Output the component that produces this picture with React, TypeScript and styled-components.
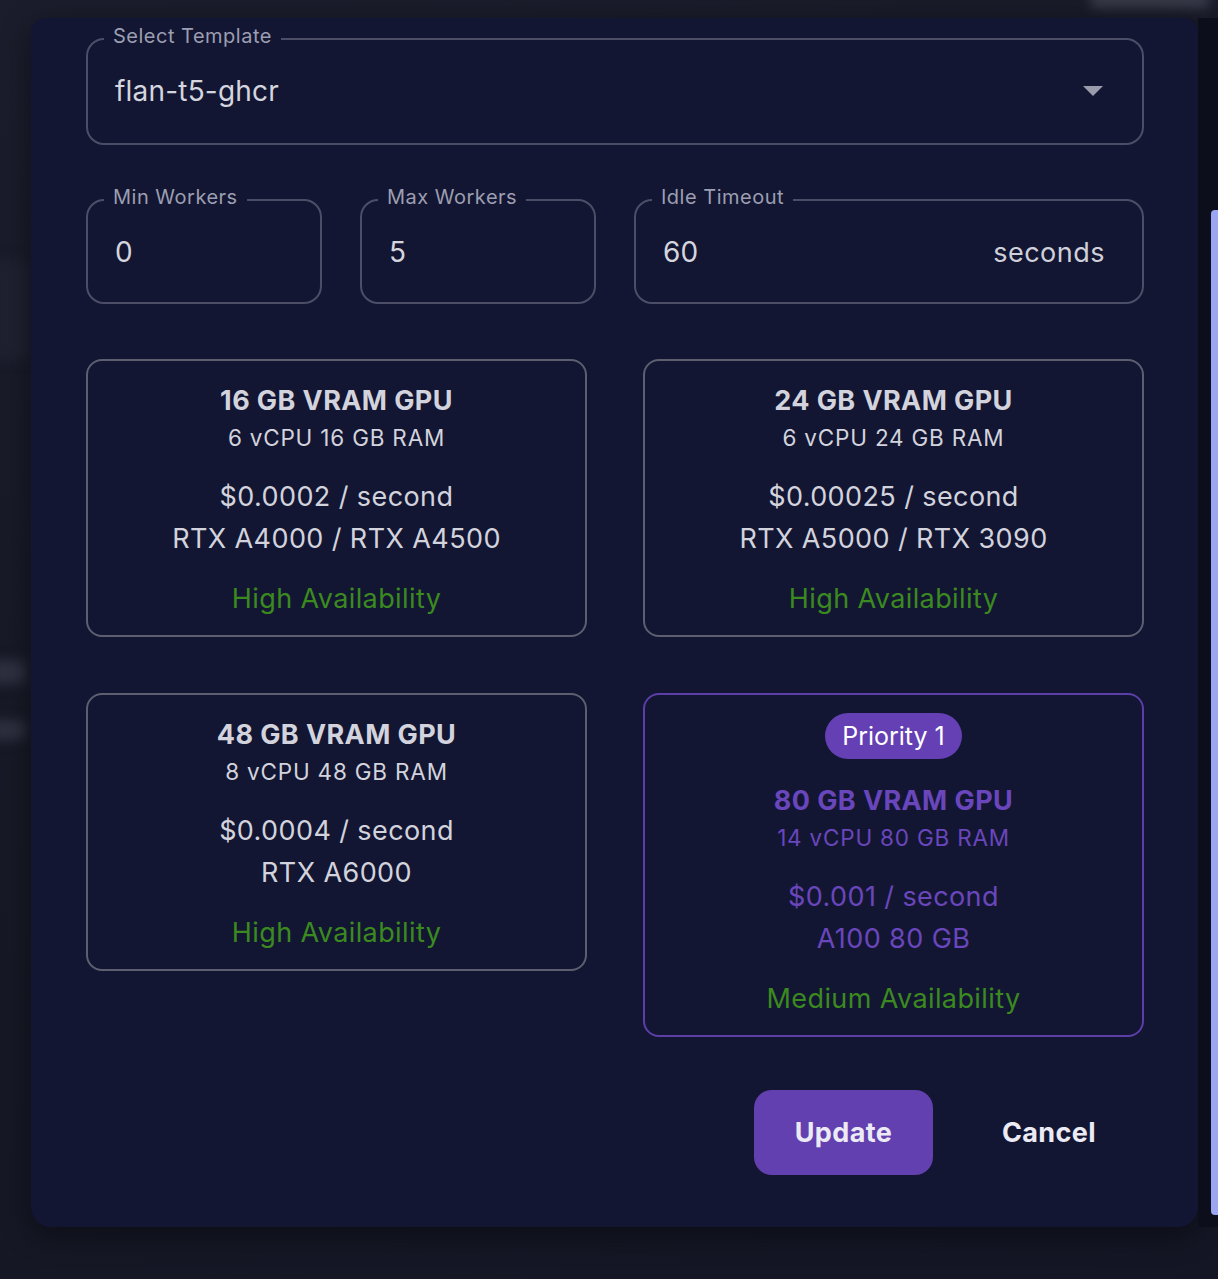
import React from "react";
import styled, { createGlobalStyle } from "styled-components";

const Global = createGlobalStyle`
  html, body { margin: 0; padding: 0; background: #161826; }
  body { font-family: Inter, "Noto Sans", "Liberation Sans", sans-serif; }
  * { box-sizing: border-box; }
`;

const Page = styled.div`
  position: relative;
  width: 1218px;
  height: 1279px;
  overflow: hidden;
  display: flex;
  align-items: flex-start;
  padding: 18px 0 0 31px;
  background: linear-gradient(160deg, #1b1d2c 0%, #171926 45%, #141625 100%);
`;

const Blur = styled.div<{ $x: number; $y: number; $w: number; $h: number; $c: string }>`
  position: absolute;
  left: ${(p) => p.$x}px;
  top: ${(p) => p.$y}px;
  width: ${(p) => p.$w}px;
  height: ${(p) => p.$h}px;
  background: ${(p) => p.$c};
  filter: blur(6px);
  border-radius: 6px;
`;

const Modal = styled.div`
  position: relative;
  width: 1167px;
  height: 1209px;
  background: #131632;
  border-radius: 14px 14px 20px 20px;
  box-shadow: 0 8px 30px rgba(0, 0, 0, 0.45);
  padding: 6px 54px 0 55px;
  display: flex;
  flex-direction: column;
`;

const Gutter = styled.div`
  position: relative;
  width: 20px;
  height: 1209px;
  background: #0c0e1b;
  display: flex;
  justify-content: flex-end;
`;

const Thumb = styled.div`
  margin-top: 192px;
  width: 7px;
  height: 1005px;
  border-radius: 4px 0 0 4px;
  background: #9ba6f2;
`;

const Field = styled.fieldset<{ $pb: number }>`
  margin: 0;
  min-width: 0;
  border: 2px solid #4b4e66;
  border-radius: 18px;
  padding: 0 39px 0 27px;
  padding-bottom: ${(p) => p.$pb}px;
`;

const Legend = styled.legend`
  font-size: 20px;
  line-height: 24px;
  color: #9c9eb1;
  padding: 0 9px 6px;
  margin-left: -11px;
  letter-spacing: 0.5px;
`;

const ValueRow = styled.div`
  height: 74px;
  display: flex;
  align-items: center;
  justify-content: space-between;
  font-size: 28px;
  color: #d4d5de;
  letter-spacing: 0.2px;
`;

const Caret = styled.span`
  width: 0;
  height: 0;
  border-left: 10px solid transparent;
  border-right: 10px solid transparent;
  border-top: 10px solid #9a9bab;
`;

const Unit = styled.span`
  font-size: 27px;
  color: #cfd0da;
  letter-spacing: 0.5px;
  margin-right: -2px;
`;

const InputsRow = styled.div`
  display: grid;
  grid-template-columns: 236px 236px 1fr;
  column-gap: 38px;
  margin-top: 40px;
`;

const Cards = styled.div`
  display: grid;
  grid-template-columns: 1fr 1fr;
  gap: 56px;
  align-items: start;
  margin-top: 55px;
`;

const Card = styled.div<{ $active?: boolean }>`
  border: 2px solid ${(p) => (p.$active ? "#5b3ea8" : "#5d5f70")};
  border-radius: 16px;
  padding: ${(p) => (p.$active ? "18px 10px 15px" : "22px 10px 15px")};
  display: flex;
  flex-direction: column;
  align-items: center;
  text-align: center;
  color: ${(p) => (p.$active ? "#6a46bd" : "#d2d3dd")};
`;

const Badge = styled.div`
  height: 46px;
  padding: 0 17px;
  border-radius: 23px;
  background: #6440b4;
  color: #ffffff;
  font-size: 25px;
  line-height: 46px;
  margin-bottom: 24px;
`;

const Title = styled.div`
  font-size: 27px;
  font-weight: 700;
  line-height: 36px;
  letter-spacing: 0.4px;
`;

const Sub = styled.div`
  margin-top: 1px;
  font-size: 22.5px;
  line-height: 36px;
  letter-spacing: 0.8px;
`;

const Price = styled.div`
  margin-top: 20px;
  font-size: 27px;
  line-height: 42px;
  letter-spacing: 0.4px;
`;

const Avail = styled.div`
  margin-top: 18px;
  font-size: 27px;
  line-height: 42px;
  color: #3b8a20;
  letter-spacing: 0.4px;
`;

const Actions = styled.div`
  display: flex;
  justify-content: flex-end;
  gap: 26px;
  margin-top: 53px;
  padding-right: 5px;
`;

const Button = styled.button<{ $primary?: boolean }>`
  width: ${(p) => (p.$primary ? "179px" : "180px")};
  height: 85px;
  border: none;
  border-radius: 18px;
  background: ${(p) => (p.$primary ? "#6340b0" : "transparent")};
  color: #ecebf5;
  font-family: Inter, "Noto Sans", sans-serif;
  font-size: 27px;
  font-weight: 700;
  letter-spacing: 0.4px;
  cursor: pointer;
`;

type Gpu = {
  title: string;
  spec: string;
  price: string;
  models: string;
  avail: string;
  priority?: string;
};

const gpus: Gpu[] = [
  { title: "16 GB VRAM GPU", spec: "6 vCPU 16 GB RAM", price: "$0.0002 / second", models: "RTX A4000 / RTX A4500", avail: "High Availability" },
  { title: "24 GB VRAM GPU", spec: "6 vCPU 24 GB RAM", price: "$0.00025 / second", models: "RTX A5000 / RTX 3090", avail: "High Availability" },
  { title: "48 GB VRAM GPU", spec: "8 vCPU 48 GB RAM", price: "$0.0004 / second", models: "RTX A6000", avail: "High Availability" },
  { title: "80 GB VRAM GPU", spec: "14 vCPU 80 GB RAM", price: "$0.001 / second", models: "A100 80 GB", avail: "Medium Availability", priority: "Priority 1" },
];

export default function App() {
  return (
    <>
      <Global />
      <Page>
        <Blur $x={1090} $y={-8} $w={120} $h={16} $c="#3a3c4a" />
        <Blur $x={-10} $y={660} $w={36} $h={24} $c="#2e3040" />
        <Blur $x={-10} $y={720} $w={36} $h={20} $c="#2e3040" />
        <Blur $x={-10} $y={260} $w={40} $h={100} $c="#1f2130" />
        <Modal>
          <Field $pb={15}>
            <Legend>Select Template</Legend>
            <ValueRow>
              <span>flan-t5-ghcr</span>
              <Caret />
            </ValueRow>
          </Field>
          <InputsRow>
            <Field $pb={13}>
              <Legend>Min Workers</Legend>
              <ValueRow>0</ValueRow>
            </Field>
            <Field $pb={13}>
              <Legend>Max Workers</Legend>
              <ValueRow>5</ValueRow>
            </Field>
            <Field $pb={13}>
              <Legend>Idle Timeout</Legend>
              <ValueRow>
                <span>60</span>
                <Unit>seconds</Unit>
              </ValueRow>
            </Field>
          </InputsRow>
          <Cards>
            {gpus.map((g) => (
              <Card key={g.title} $active={!!g.priority}>
                {g.priority && <Badge>{g.priority}</Badge>}
                <Title>{g.title}</Title>
                <Sub>{g.spec}</Sub>
                <Price>
                  {g.price}
                  <br />
                  {g.models}
                </Price>
                <Avail>{g.avail}</Avail>
              </Card>
            ))}
          </Cards>
          <Actions>
            <Button $primary>Update</Button>
            <Button>Cancel</Button>
          </Actions>
        </Modal>
        <Gutter>
          <Thumb />
        </Gutter>
      </Page>
    </>
  );
}
